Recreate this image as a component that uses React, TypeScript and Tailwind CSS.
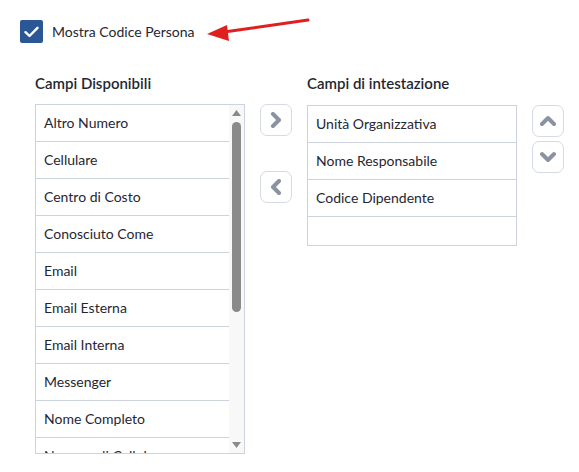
const available = [
  'Altro Numero',
  'Cellulare',
  'Centro di Costo',
  'Conosciuto Come',
  'Email',
  'Email Esterna',
  'Email Interna',
  'Messenger',
  'Nome Completo',
  'Numero di Cellulare',
];

const header = ['Unità Organizzativa', 'Nome Responsabile', 'Codice Dipendente'];

// chevron pointing right by default, rotated for the other directions
function Chevron({ rotate }: { rotate: string }) {
  return (
    <svg width="16" height="16" viewBox="0 0 16 16" className={rotate}>
      <polyline points="5,2 11,8 5,14" fill="none" stroke="#8b93a3" strokeWidth="4" strokeLinejoin="round" strokeLinecap="round" />
    </svg>
  );
}

function IconButton({ children }: { children: React.ReactNode }) {
  return (
    <button className="flex h-[32px] w-[32px] items-center justify-center rounded-[7px] border border-[#d5dae3] bg-white">
      {children}
    </button>
  );
}

export default function App() {
  return (
    <div className="min-h-screen bg-white font-['Lato',sans-serif] text-[14px] text-[#1f2733]">
      {/* Checkbox row */}
      <div className="flex items-center pl-[20px] pt-[20px]">
        <div className="flex h-[23px] w-[23px] items-center justify-center rounded-[2px] bg-[#2b5797]">
          <svg width="15" height="12" viewBox="0 0 15 12" fill="none">
            <path d="M1.5 6.2 L5.5 10 L13.5 1.8" stroke="white" strokeWidth="2.4" strokeLinecap="round" strokeLinejoin="round" />
          </svg>
        </div>
        <span className="ml-[9px]">Mostra Codice Persona</span>
        <svg width="104" height="24" viewBox="0 0 104 24" className="ml-[12px] -mt-[6px]">
          <line x1="18" y1="15" x2="102" y2="3" stroke="#e0201f" strokeWidth="3" strokeLinecap="round" />
          <polygon points="1,17 21,8 23,24" fill="#e0201f" />
        </svg>
      </div>

      {/* Lists */}
      <div className="mt-[30px] flex gap-[15px] pl-[35px]">
        <div className="w-[210px]">
          <div className="h-[20px] text-[15px] font-semibold leading-[20px]">Campi Disponibili</div>
          <div className="mt-[11px] flex h-[350px] overflow-hidden border border-[#ccd3de]">
            <div className="flex-1 overflow-hidden">
              {available.map((item) => (
                <div key={item} className="flex h-[37px] shrink-0 items-center border-b border-[#ccd3de] pb-[2px] pl-[8px]">
                  {item}
                </div>
              ))}
            </div>
            <div className="flex w-[15px] flex-col items-center bg-[#f8f8f8]">
              <svg width="9" height="6" viewBox="0 0 9 6" className="mt-[5px]">
                <polygon points="4.5,0 9,6 0,6" fill="#8a8a8a" />
              </svg>
              <div className="mt-[6px] h-[190px] w-[9px] rounded-full bg-[#8a8a8a]" />
              <div className="flex-1" />
              <svg width="9" height="6" viewBox="0 0 9 6" className="mb-[5px]">
                <polygon points="0,0 9,0 4.5,6" fill="#8a8a8a" />
              </svg>
            </div>
          </div>
        </div>

        <div className="flex flex-col gap-[35px] pt-[31px]">
          <IconButton>
            <Chevron rotate="" />
          </IconButton>
          <IconButton>
            <Chevron rotate="rotate-180" />
          </IconButton>
        </div>

        <div className="w-[210px]">
          <div className="h-[20px] text-[15px] font-semibold leading-[20px]">Campi di intestazione</div>
          <div className="mt-[12px] border border-[#ccd3de]">
            {header.map((item) => (
              <div key={item} className="flex h-[37px] items-center border-b border-[#ccd3de] pb-[2px] pl-[8px]">
                {item}
              </div>
            ))}
            <div className="h-[28px]" />
          </div>
        </div>

        <div className="flex flex-col gap-[4px] pt-[32px]">
          <IconButton>
            <Chevron rotate="-rotate-90" />
          </IconButton>
          <IconButton>
            <Chevron rotate="rotate-90" />
          </IconButton>
        </div>
      </div>
    </div>
  );
}
